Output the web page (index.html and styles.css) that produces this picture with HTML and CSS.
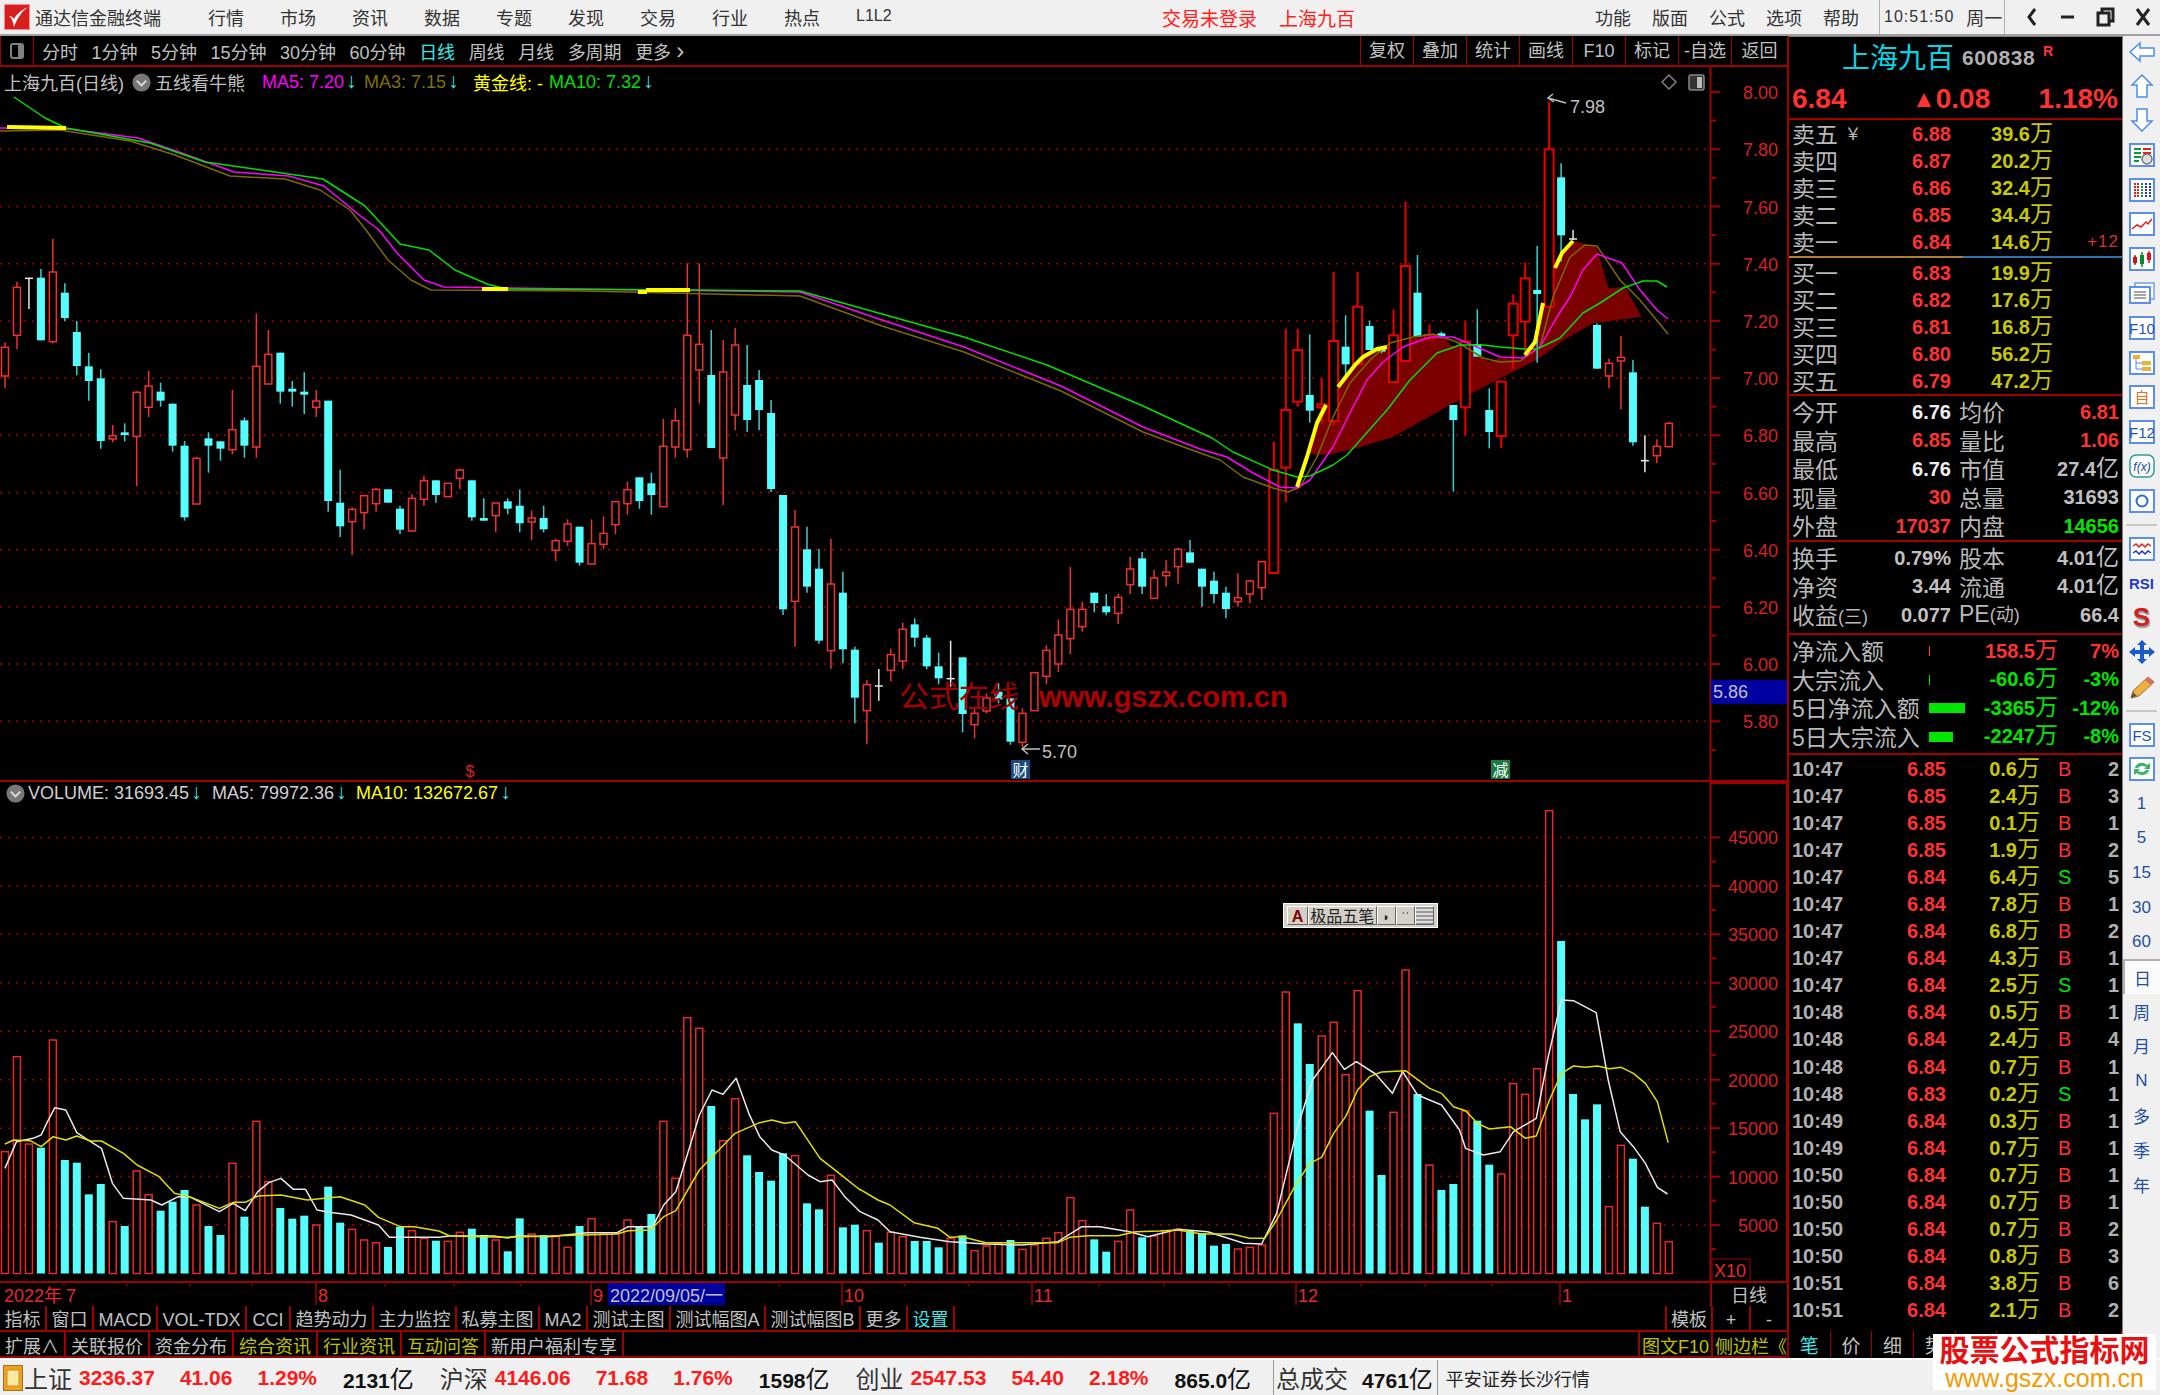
FILE: index.html
```html
<!DOCTYPE html>
<html lang="zh-CN">
<head>
    <meta charset="UTF-8">
    <title>通达信金融终端</title>
    <link rel="stylesheet" href="styles.css">
</head>
<body>
<div class="titlebar">
    <svg class="logo" viewBox="0 0 26 26"><rect width="26" height="26" fill="#d81e1e"/><rect x="0.5" y="0.5" width="25" height="25" fill="none" stroke="#f09090"/><path d="M5 12 C8 14 9 18 10 23 C13 15 17 8 24 3 C17 6 12 11 10 15 C9 13 7 12 5 12 Z" fill="#fff"/></svg>
    <span class="app-name">通达信金融终端</span>
    <nav class="menu">
        <span>行情</span><span>市场</span><span>资讯</span><span>数据</span><span>专题</span><span>发现</span><span>交易</span><span>行业</span><span>热点</span><span class="menu-l2">L1L2</span>
    </nav>
    <div class="notice"><span>交易未登录</span><span>上海九百</span></div>
    <nav class="menu menu-right"><span>功能</span><span>版面</span><span>公式</span><span>选项</span><span>帮助</span></nav>
    <div class="clock"><span class="clock-time">10:51:50</span><span>周一</span></div>
    <svg class="win-btns" viewBox="0 0 157 34">
        <path d="M30 9 L24 17 L30 25" fill="none" stroke="#222" stroke-width="3"/>
        <path d="M56 17 H69" stroke="#222" stroke-width="3"/>
        <path d="M93 13 H104 V25 H93 Z M97 13 V9 H108 V21 H104" fill="none" stroke="#222" stroke-width="3"/>
        <path d="M132 9 L144 25 M144 9 L132 25" stroke="#222" stroke-width="3"/>
    </svg>
</div>

<div class="main">
    <div class="chart-col">
        <div class="toolbar">
            <span class="tb-box"><i></i></span>
            <div class="periods">
                <span>分时</span><span>1分钟</span><span>5分钟</span><span>15分钟</span><span>30分钟</span><span>60分钟</span><span class="cyan">日线</span><span>周线</span><span>月线</span><span>多周期</span><span>更多 <i class="chev">›</i></span>
            </div>
            <div class="tb-tabs">
                <span>复权</span><span>叠加</span><span>统计</span><span>画线</span><span>F10</span><span>标记</span><span>-自选</span><span>返回</span>
            </div>
        </div>

        <div class="chart-wrap">
            <svg id="chart" viewBox="0 67 1787 1239" width="1787" height="1239"></svg>

            <div class="legend legend-price">
                <span>上海九百(日线)</span>
                <svg class="drop" viewBox="0 0 20 20"><circle cx="10" cy="10" r="9.5" fill="#777"/><path d="M5 8 L10 13 L15 8" fill="none" stroke="#ddd" stroke-width="2"/></svg>
                <span class="lg-name">五线看牛熊</span>
                <span class="lg-ma5">MA5: 7.20<b>↓</b></span>
                <span class="lg-ma3">MA3: 7.15<b>↓</b></span>
                <span class="lg-gold">黄金线: -</span>
                <span class="lg-ma10">MA10: 7.32<b>↓</b></span>
            </div>
            <div class="legend legend-vol">
                <svg class="drop" viewBox="0 0 20 20"><circle cx="10" cy="10" r="9.5" fill="#777"/><path d="M5 8 L10 13 L15 8" fill="none" stroke="#ddd" stroke-width="2"/></svg>
                <span class="lg-volume">VOLUME: 31693.45<b>↓</b></span>
                <span class="lg-volma5">MA5: 79972.36<b>↓</b></span>
                <span class="lg-volma10">MA10: 132672.67<b>↓</b></span>
            </div>

            <div class="ime">
                <span class="ime-a">A</span>
                <span class="ime-name">极品五笔</span>
                <span class="ime-btn">◗</span>
                <span class="ime-btn">ˈˈ</span>
                <span class="ime-btn ime-kb"></span>
            </div>
        </div>

        <div class="tabrow">
            <span>指标</span><span>窗口</span><span>MACD</span><span>VOL-TDX</span><span>CCI</span><span>趋势动力</span><span>主力监控</span><span>私募主图</span><span>MA2</span><span>测试主图</span><span>测试幅图A</span><span>测试幅图B</span><span>更多</span><span class="cyan">设置</span>
            <div class="tabrow-right"><span class="cell-l">模板</span><span class="cell-s">+</span><span class="cell-s">-</span></div>
        </div>
        <div class="tabrow tabrow-wide">
            <span>扩展∧</span><span>关联报价</span><span>资金分布</span><span class="olive">综合资讯</span><span class="olive">行业资讯</span><span class="olive">互动问答</span><span>新用户福利专享</span>
            <div class="tabrow-right"><span class="olive">图文F10</span><span class="olive cell-side">侧边栏《</span></div>
        </div>
    </div>

    <div class="panel">
        <div class="sec sec-head">
            <div class="stock-title"><span class="stock-name">上海九百</span><span class="stock-code">600838</span><span class="stock-r">R</span></div>
            <div class="stock-price"><span>6.84</span><span><i class="up">▲</i>0.08</span><span>1.18%</span></div>
        </div>

        <div class="sec sec-book">
            <div class="book"><span class="lb">卖五 <em>￥</em></span><span class="red">6.88</span><span class="qty">39.6<i>万</i></span><span></span></div>
            <div class="book"><span class="lb">卖四</span><span class="red">6.87</span><span class="qty">20.2<i>万</i></span><span></span></div>
            <div class="book"><span class="lb">卖三</span><span class="red">6.86</span><span class="qty">32.4<i>万</i></span><span></span></div>
            <div class="book"><span class="lb">卖二</span><span class="red">6.85</span><span class="qty">34.4<i>万</i></span><span></span></div>
            <div class="book"><span class="lb">卖一</span><span class="red">6.84</span><span class="qty">14.6<i>万</i></span><span class="delta">+12</span></div>
            <div class="book-split"></div>
            <div class="book"><span class="lb">买一</span><span class="red">6.83</span><span class="qty">19.9<i>万</i></span><span></span></div>
            <div class="book"><span class="lb">买二</span><span class="red">6.82</span><span class="qty">17.6<i>万</i></span><span></span></div>
            <div class="book"><span class="lb">买三</span><span class="red">6.81</span><span class="qty">16.8<i>万</i></span><span></span></div>
            <div class="book"><span class="lb">买四</span><span class="red">6.80</span><span class="qty">56.2<i>万</i></span><span></span></div>
            <div class="book"><span class="lb">买五</span><span class="red">6.79</span><span class="qty">47.2<i>万</i></span><span></span></div>
        </div>

        <div class="sec sec-stats">
            <div class="stat"><span class="lb">今开</span><span class="white">6.76</span><span class="lb lb2">均价</span><span class="red">6.81</span></div>
            <div class="stat"><span class="lb">最高</span><span class="red">6.85</span><span class="lb lb2">量比</span><span class="red">1.06</span></div>
            <div class="stat"><span class="lb">最低</span><span class="white">6.76</span><span class="lb lb2">市值</span><span class="grey">27.4<i>亿</i></span></div>
            <div class="stat"><span class="lb">现量</span><span class="red">30</span><span class="lb lb2">总量</span><span class="grey">31693</span></div>
            <div class="stat"><span class="lb">外盘</span><span class="red">17037</span><span class="lb lb2">内盘</span><span class="green">14656</span></div>
        </div>

        <div class="sec sec-stats2">
            <div class="stat"><span class="lb">换手</span><span class="grey">0.79%</span><span class="lb lb2">股本</span><span class="grey">4.01<i>亿</i></span></div>
            <div class="stat"><span class="lb">净资</span><span class="grey">3.44</span><span class="lb lb2">流通</span><span class="grey">4.01<i>亿</i></span></div>
            <div class="stat"><span class="lb">收益<small>(三)</small></span><span class="grey">0.077</span><span class="lb lb2">PE<small>(动)</small></span><span class="grey">66.4</span></div>
        </div>

        <div class="sec sec-flow">
            <div class="flow"><span class="lb">净流入额</span><span class="fbar"><i class="tick-red"></i></span><span class="red">158.5<i>万</i></span><span class="red">7%</span></div>
            <div class="flow"><span class="lb">大宗流入</span><span class="fbar"><i class="tick-green"></i></span><span class="green">-60.6<i>万</i></span><span class="green">-3%</span></div>
            <div class="flow"><span class="lb">5日净流入额</span><span class="fbar"><i class="bar-long"></i></span><span class="green">-3365<i>万</i></span><span class="green">-12%</span></div>
            <div class="flow"><span class="lb">5日大宗流入</span><span class="fbar"><i class="bar-short"></i></span><span class="green">-2247<i>万</i></span><span class="green">-8%</span></div>
        </div>

        <div class="ticks">
            <div class="trow"><span>10:47</span><span class="red">6.85</span><span class="qty">0.6<i>万</i></span><span class="red">B</span><span>2</span></div>
            <div class="trow"><span>10:47</span><span class="red">6.85</span><span class="qty">2.4<i>万</i></span><span class="red">B</span><span>3</span></div>
            <div class="trow"><span>10:47</span><span class="red">6.85</span><span class="qty">0.1<i>万</i></span><span class="red">B</span><span>1</span></div>
            <div class="trow"><span>10:47</span><span class="red">6.85</span><span class="qty">1.9<i>万</i></span><span class="red">B</span><span>2</span></div>
            <div class="trow"><span>10:47</span><span class="red">6.84</span><span class="qty">6.4<i>万</i></span><span class="green">S</span><span>5</span></div>
            <div class="trow"><span>10:47</span><span class="red">6.84</span><span class="qty">7.8<i>万</i></span><span class="red">B</span><span>1</span></div>
            <div class="trow"><span>10:47</span><span class="red">6.84</span><span class="qty">6.8<i>万</i></span><span class="red">B</span><span>2</span></div>
            <div class="trow"><span>10:47</span><span class="red">6.84</span><span class="qty">4.3<i>万</i></span><span class="red">B</span><span>1</span></div>
            <div class="trow"><span>10:47</span><span class="red">6.84</span><span class="qty">2.5<i>万</i></span><span class="green">S</span><span>1</span></div>
            <div class="trow"><span>10:48</span><span class="red">6.84</span><span class="qty">0.5<i>万</i></span><span class="red">B</span><span>1</span></div>
            <div class="trow"><span>10:48</span><span class="red">6.84</span><span class="qty">2.4<i>万</i></span><span class="red">B</span><span>4</span></div>
            <div class="trow"><span>10:48</span><span class="red">6.84</span><span class="qty">0.7<i>万</i></span><span class="red">B</span><span>1</span></div>
            <div class="trow"><span>10:48</span><span class="red">6.83</span><span class="qty">0.2<i>万</i></span><span class="green">S</span><span>1</span></div>
            <div class="trow"><span>10:49</span><span class="red">6.84</span><span class="qty">0.3<i>万</i></span><span class="red">B</span><span>1</span></div>
            <div class="trow"><span>10:49</span><span class="red">6.84</span><span class="qty">0.7<i>万</i></span><span class="red">B</span><span>1</span></div>
            <div class="trow"><span>10:50</span><span class="red">6.84</span><span class="qty">0.7<i>万</i></span><span class="red">B</span><span>1</span></div>
            <div class="trow"><span>10:50</span><span class="red">6.84</span><span class="qty">0.7<i>万</i></span><span class="red">B</span><span>1</span></div>
            <div class="trow"><span>10:50</span><span class="red">6.84</span><span class="qty">0.7<i>万</i></span><span class="red">B</span><span>2</span></div>
            <div class="trow"><span>10:50</span><span class="red">6.84</span><span class="qty">0.8<i>万</i></span><span class="red">B</span><span>3</span></div>
            <div class="trow"><span>10:51</span><span class="red">6.84</span><span class="qty">3.8<i>万</i></span><span class="red">B</span><span>6</span></div>
            <div class="trow"><span>10:51</span><span class="red">6.84</span><span class="qty">2.1<i>万</i></span><span class="red">B</span><span>2</span></div>
        </div>

        <div class="ptabs"><span class="cyan">笔</span><span>价</span><span>细</span><span>势</span><span></span><span></span><span></span><span></span></div>
    </div>

    <div class="side">
        <div class="si"><svg viewBox="0 0 28 24"><path d="M2 12 L12 3 V8 H26 V16 H12 V21 Z" fill="#fff" stroke="#4a8cf0" stroke-width="1.5"/></svg></div>
        <div class="si"><svg viewBox="0 0 28 24"><path d="M14 1 L24 11 H19 V23 H9 V11 H4 Z" fill="#fff" stroke="#4a8cf0" stroke-width="1.5"/></svg></div>
        <div class="si"><svg viewBox="0 0 28 24"><path d="M14 23 L24 13 H19 V1 H9 V13 H4 Z" fill="#fff" stroke="#4a8cf0" stroke-width="1.5"/></svg></div>
        <div class="si"><svg viewBox="0 0 28 24"><rect class="bx" x="2" y="1" width="24" height="22"/><path d="M6 6 H13 M6 10 H13" stroke="#0a9a3a" stroke-width="2"/><path d="M15 6 H23 M15 10 H23" stroke="#e02020" stroke-width="2"/><path d="M6 14 H13 M6 18 H11" stroke="#0a9a3a" stroke-width="2"/><circle cx="19" cy="16" r="5" fill="#ddd" stroke="#777" stroke-width="1.5"/></svg></div>
        <div class="si"><svg viewBox="0 0 28 24"><rect class="bx" x="2" y="1" width="24" height="22"/><path d="M7 5 V20 M10 5 V20" stroke="#e02020" stroke-width="2" stroke-dasharray="2 1"/><path d="M14 5 V20" stroke="#0a9a3a" stroke-width="2" stroke-dasharray="2 1"/><path d="M18 5 V20 M22 5 V20" stroke="#2030d0" stroke-width="2" stroke-dasharray="2 1"/></svg></div>
        <div class="si"><svg viewBox="0 0 28 24"><rect class="bx" x="2" y="1" width="24" height="22"/><path d="M4 17 L9 13 L13 15 L18 10 L20 12 L24 7" fill="none" stroke="#e02020" stroke-width="1.5"/></svg></div>
        <div class="si"><svg viewBox="0 0 28 24"><rect class="bx" x="2" y="1" width="24" height="22"/><path d="M7 8 V18 M14 5 V20" stroke="#0a8a30" stroke-width="1.5"/><path d="M21 4 V16 M7 9 V17" stroke="#e01010" stroke-width="1.5"/><rect x="5" y="10" width="4" height="6" fill="#e01010"/><rect x="12" y="8" width="4" height="9" fill="#0a8a30"/><rect x="19" y="6" width="4" height="7" fill="#e01010"/></svg></div>
        <div class="si"><svg viewBox="0 0 28 24"><rect x="7" y="2" width="19" height="16" fill="#fff" stroke="#6ca0ee" stroke-width="1.5"/><rect class="bx" x="2" y="6" width="20" height="16"/><path d="M6 11 H18 M6 14 H18 M6 17 H18" stroke="#888" stroke-width="1.5"/></svg></div>
        <div class="si"><svg viewBox="0 0 28 24"><rect class="bx" x="2" y="1" width="24" height="22"/><text class="ic-t" x="14" y="18">F10</text></svg></div>
        <div class="si"><svg viewBox="0 0 28 24"><rect class="bx" x="2" y="1" width="24" height="22"/><rect x="5" y="4" width="7" height="4" fill="#f0b030"/><rect x="14" y="10" width="9" height="4" fill="#f0b030"/><rect x="14" y="16" width="9" height="4" fill="#f0b030"/><path d="M8 8 V18 H14 M8 12 H14" fill="none" stroke="#4a8cf0"/></svg></div>
        <div class="si"><svg viewBox="0 0 28 24"><rect class="bx" x="2" y="1" width="24" height="22"/><text class="ic-zi" x="14" y="18">自</text></svg></div>
        <div class="si"><svg viewBox="0 0 28 24"><rect class="bx" x="2" y="1" width="24" height="22"/><text class="ic-t" x="14" y="18">F12</text></svg></div>
        <div class="si"><svg viewBox="0 0 28 24"><rect x="2" y="1" width="24" height="22" rx="6" fill="#fff" stroke="#2a9a9a" stroke-width="1.5"/><text class="ic-fx" x="14" y="17">f(x)</text></svg></div>
        <div class="si"><svg viewBox="0 0 28 24"><rect class="bx" x="2" y="1" width="24" height="22"/><circle cx="14" cy="12" r="5.5" fill="none" stroke="#2a6ad8" stroke-width="2"/></svg></div>
        <div class="si-sep"></div>
        <div class="si"><svg viewBox="0 0 28 24"><rect class="bx" x="2" y="1" width="24" height="22"/><path d="M5 9 L8 7 L11 10 L14 7 L17 10 L20 7 L23 9" fill="none" stroke="#e02020" stroke-width="1.5"/><path d="M5 16 L8 14 L11 17 L14 14 L17 17 L20 14 L23 16" fill="none" stroke="#2030d0" stroke-width="1.5"/></svg></div>
        <div class="si si-rsi">RSI</div>
        <div class="si si-s">S</div>
        <div class="si"><svg viewBox="0 0 28 24"><path d="M14 0 L19 5 H16 V10 H21 V7 L27 12 L21 17 V14 H16 V19 H19 L14 24 L9 19 H12 V14 H7 V17 L1 12 L7 7 V10 H12 V5 H9 Z" fill="#1a5ad0"/></svg></div>
        <div class="si"><svg viewBox="0 0 28 24"><path d="M3 23 L5 16 L20 2 L26 7 L11 21 Z" fill="#f0b040" stroke="#a07030"/><path d="M20 2 L26 7 L23 10 L17 5 Z" fill="#d87060"/><path d="M3 23 L5 17 L9 21 Z" fill="#555"/></svg></div>
        <div class="si-sep"></div>
        <div class="si"><svg viewBox="0 0 28 24"><rect class="bx" x="2" y="1" width="24" height="22"/><text class="ic-t" x="14" y="18">FS</text></svg></div>
        <div class="si"><svg viewBox="0 0 28 24"><rect class="bx" x="2" y="1" width="24" height="22"/><path d="M7 11 C8 6 15 4 19 8 L22 6 V12 H16 L18 10 C15 8 11 9 10 11 Z" fill="#3cb46a"/><path d="M21 13 C20 18 13 20 9 16 L6 18 V12 H12 L10 14 C13 16 17 15 18 13 Z" fill="#3cb46a"/></svg></div>
        <div class="si si-p">1</div>
        <div class="si si-p">5</div>
        <div class="si si-p">15</div>
        <div class="si si-p">30</div>
        <div class="si si-p">60</div>
        <div class="si si-p si-on">日</div>
        <div class="si si-p">周</div>
        <div class="si si-p">月</div>
        <div class="si si-p">N</div>
        <div class="si si-p">多</div>
        <div class="si si-p">季</div>
        <div class="si si-p">年</div>
    </div>
</div>

<div class="statusbar">
    <svg class="st-icon" viewBox="0 0 20 26"><rect x="0.5" y="0.5" width="19" height="25" fill="#f2a020" stroke="#a87010"/><rect x="4" y="5" width="12" height="16" fill="#ffe9a0" stroke="#c89020"/></svg>
    <span class="st-name st-first">上证</span><span class="st-num st-tight">3236.37</span><span class="st-num">41.06</span><span class="st-num">1.29%</span><span class="st-vol">2131<i>亿</i></span>
    <span class="st-name">沪深</span><span class="st-num st-tight">4146.06</span><span class="st-num">71.68</span><span class="st-num">1.76%</span><span class="st-vol">1598<i>亿</i></span>
    <span class="st-name">创业</span><span class="st-num st-tight">2547.53</span><span class="st-num">54.40</span><span class="st-num">2.18%</span><span class="st-vol">865.0<i>亿</i></span>
    <div class="st-total"><span class="st-name st-zero">总成交</span><span class="st-vol st-vol2">4761<i>亿</i></span></div>
    <span class="st-broker">平安证券长沙行情</span>
</div>

<div class="stamp">
    <div class="stamp-cn">股票公式指标网</div>
    <div class="stamp-en">www.gszx.com.cn</div>
</div>

<script src="chart.js"></script>
</body>
</html>
```

FILE: styles.css
```css
html, body {
    margin: 0;
    padding: 0;
    background: #000;
}

body {
    position: relative;
    width: 2160px;
    height: 1395px;
    overflow: hidden;
    display: flex;
    flex-direction: column;
    font-family: "Liberation Sans", "Noto Sans CJK SC", sans-serif;
    font-size: 18px;
    color: #c0c0c0;
}

i, em { font-style: normal; }

.cyan { color: #3fe6e6 !important; }
.olive { color: #c0c000 !important; }
.red { color: #ff3232; }
.green { color: #00e600; }
.white { color: #f0f0f0; }
.grey { color: #c0c0c0; }

/* title bar */
.titlebar {
    height: 36px;
    box-sizing: border-box;
    flex: none;
    display: flex;
    align-items: center;
    background: #f0f0f0;
    border-bottom: 2px solid #a0a0a0;
    color: #333;
    white-space: nowrap;
}
.titlebar span, .titlebar nav, .titlebar div { flex: none; }
.logo { width: 26px; height: 26px; margin-left: 4px; flex: none; }
.app-name { margin-left: 5px; }
.menu { display: flex; gap: 36px; margin-left: 47px; }
.menu-l2 { font-size: 16px; width: 35px; line-height: 24px; }
.notice { display: flex; gap: 22px; margin-left: 271px; font-size: 19px; color: #ff2020; }
.menu-right { gap: 21px; margin-left: 240px; }
.clock {
    display: flex;
    align-items: center;
    gap: 12px;
    height: 34px;
    margin-left: 20px;
    padding-left: 4px;
    width: 120px;
    border-left: 1px solid #b0b0b0;
    border-right: 1px solid #b0b0b0;
}
.clock-time { font-size: 16px; letter-spacing: 1px; }
.win-btns { width: 157px; height: 34px; flex: none; }

/* main area */
.main {
    flex: 1;
    display: flex;
    min-height: 0;
}
.chart-col {
    width: 1787px;
    flex: none;
    display: flex;
    flex-direction: column;
}

.toolbar {
    height: 31px;
    box-sizing: border-box;
    flex: none;
    display: flex;
    align-items: center;
    border-bottom: 2px solid #a00000;
}
.tb-box {
    width: 34px;
    height: 29px;
    box-sizing: border-box;
    display: flex;
    align-items: center;
    justify-content: center;
    border-right: 1px solid #a00000;
    border-left: 1px solid #a00000;
}
.tb-box i {
    width: 14px;
    height: 16px;
    box-sizing: border-box;
    border: 2px solid #808080;
    border-radius: 3px;
    border-right-width: 6px;
}
.periods { display: flex; gap: 13.5px; margin-left: 8px; white-space: nowrap; }
.chev { font-size: 24px; line-height: 18px; }
.tb-tabs { display: flex; margin-left: auto; height: 29px; }
.tb-tabs span {
    width: 52px;
    line-height: 31px;
    text-align: center;
    border-left: 1px solid #a00000;
}
.tb-tabs span:last-child { width: 55px; }

.chart-wrap {
    position: relative;
    height: 1239px;
    flex: none;
}
#chart { display: block; }

.legend {
    position: absolute;
    display: flex;
    align-items: center;
    height: 24px;
    left: 4px;
    white-space: nowrap;
}
.legend b { font-weight: 400; font-size: 21px; line-height: 20px; color: #3fe6e6; margin-left: 2px; }
.legend-price { top: 3px; }
.legend-vol { top: 714px; }
.drop { width: 19px; height: 19px; margin-left: 8px; flex: none; }
.legend-vol .drop { margin-left: 2px; }
.lg-name { margin-left: 4px; }
.lg-ma5 { color: #ff00ff; margin-left: 17px; width: 102px; }
.lg-ma3 { color: #807000; width: 109px; }
.lg-gold { color: #ffff00; width: 76px; }
.lg-ma10 { color: #00e000; }
.lg-volume { margin-left: 3px; width: 184px; color: #d0d0d0; }
.lg-volma5 { width: 144px; color: #d0d0d0; }
.lg-volma10 { color: #ffff00; }

.ime {
    position: absolute;
    left: 1283px;
    top: 836px;
    width: 155px;
    height: 25px;
    box-sizing: border-box;
    display: flex;
    padding: 2px 3px;
    background: #d4d0c8;
    border: 1px solid #fff;
    color: #222;
    font-size: 16px;
    line-height: 20px;
}
.ime span {
    box-sizing: border-box;
    text-align: center;
    border: 1px solid;
    border-color: #fff #666 #666 #fff;
}
.ime-a { width: 22px; color: #800000; font-weight: bold; }
.ime-name { width: 72px; }
.ime-btn { width: 20px; font-size: 12px; }
.ime-kb { background: repeating-linear-gradient(#999 0 2px, #ddd 2px 4px); }

.tabrow {
    height: 26px;
    box-sizing: border-box;
    flex: none;
    display: flex;
    border-bottom: 2px solid #a00000;
    line-height: 28px;
}
.tabrow > span {
    min-width: 44px;
    box-sizing: border-box;
    padding: 0 4.5px;
    text-align: center;
    border-right: 2px solid #a00000;
    white-space: nowrap;
}
.tabrow-wide { line-height: 31px; }
.tabrow-wide > span { padding: 0 5px; }
.tabrow-right { display: flex; margin-left: auto; }
.tabrow-right span {
    box-sizing: border-box;
    text-align: center;
    border-left: 2px solid #a00000;
    padding: 0 2px;
    white-space: nowrap;
}
.cell-l { width: 46px; }
.cell-s { width: 38px; }
.cell-side { width: 76px; }

/* quote panel */
.panel {
    width: 335px;
    box-sizing: border-box;
    flex: none;
    display: flex;
    flex-direction: column;
    border-left: 2px solid #a00000;
    background: #000;
}
.sec {
    flex: none;
    box-sizing: border-box;
    padding: 0 3px;
    border-bottom: 2px solid #a00000;
}
.sec-head { height: 84px; padding: 0; border-top: 1px solid #808080; }
.sec-book { height: 276px; }
.sec-stats { height: 146px; }
.sec-stats2 { height: 93px; }
.sec-flow { height: 120px; }

.stock-title {
    height: 38px;
    margin-bottom: 8px;
    display: flex;
    align-items: center;
    padding-left: 53px;
}
.stock-name { font-size: 28px; color: #00d8e8; }
.stock-code { font-size: 21px; font-weight: bold; color: #b0b0b0; margin-left: 8px; margin-top: 4px; letter-spacing: 0.5px; }
.stock-r { font-size: 14px; font-weight: bold; color: #ff3232; margin-left: 8px; align-self: flex-start; margin-top: 6px; }
.stock-price {
    display: grid;
    grid-template-columns: 120px 80px 1fr;
    padding: 0 4px 0 3px;
    font-size: 28px;
    line-height: 32px;
    font-weight: bold;
    color: #ff3232;
    white-space: nowrap;
}
.stock-price span:last-child { text-align: right; }
.up { font-size: 24px; vertical-align: 1px; }

.lb { font-size: 23px; color: #b8b8b8; white-space: nowrap; margin-bottom: 2px; }
.lb em { font-size: 17px; vertical-align: 3px; }
.lb small { font-size: 18px; vertical-align: 1px; }
.qty { color: #c8c800; }
.book, .stat, .flow, .trow {
    display: grid;
    align-items: center;
    font-size: 20px;
    font-weight: bold;
    text-align: right;
    white-space: nowrap;
}
.book i, .stat i, .flow i, .trow i { font-weight: 400; font-size: 23px; line-height: 20px; }
.book i { color: #c8c800; }
.book .lb, .stat .lb, .flow .lb { text-align: left; font-weight: 400; }
.book {
    grid-template-columns: 100px 59px 102px 66px;
    height: 27px;
}
.book:first-child { margin-top: -4px; }
.book-split {
    height: 2px;
    margin: 5px -3px -3px;
    background: linear-gradient(90deg, #b08030 0 174px, #3070b0 174px);
}
.delta { font-size: 17px; font-weight: 400; color: #d83030; letter-spacing: 1px; }
.stat {
    grid-template-columns: 70px 89px 88px 80px;
    height: 28.5px;
}
.stat:first-child, .flow:first-child { margin-top: -2px; }
.lb2 { padding-left: 8px; }
.flow {
    grid-template-columns: 137px 40px 89px 61px;
    height: 28.5px;
}
.fbar { display: flex; align-items: center; }
.fbar i { display: block; height: 10px; }
.tick-red { width: 1px; background: #ff3232; }
.tick-green { width: 1px; background: #00e600; }
.bar-long { width: 36px; background: #00e600; }
.bar-short { width: 24px; background: #00e600; }

.ticks { flex: 1; padding: 1px 3px 0; }
.trow {
    grid-template-columns: 100px 54px 94px 35px 44px;
    height: 27.05px;
    color: #b0b0b0;
}
.trow span:first-child { text-align: left; }
.trow span:nth-child(4) { text-align: left; padding-left: 18px; font-weight: 400; }
.trow span:nth-child(3) { color: #c8c800; }

.ptabs {
    height: 27px;
    flex: none;
    display: flex;
    font-size: 19px;
    line-height: 31px;
}
.ptabs span {
    width: 41px;
    text-align: center;
    border-right: 1px solid #a00000;
}

/* icon strip */
.side {
    flex: 1;
    background: #f0f0f0;
    overflow: hidden;
    border-left: 1px solid #808080;
}
.si {
    height: 34.6px;
    display: flex;
    align-items: center;
    justify-content: center;
    color: #1f4fa0;
}
.si:first-child { height: 32.6px; }
.si svg { width: 28px; height: 24px; }
.si-sep { height: 13px; position: relative; }
.si-sep::after {
    content: "";
    position: absolute;
    left: 3px;
    right: 3px;
    top: 6px;
    border-top: 2px solid #c8c8c8;
}
.bx { fill: #fff; stroke: #5a8ef0; stroke-width: 2; }
.ic-t { font-size: 15px; fill: #2050c0; text-anchor: middle; }
.ic-zi { font-size: 15px; fill: #e07020; text-anchor: middle; }
.ic-fx { font-size: 12px; fill: #0a4ab0; text-anchor: middle; font-style: italic; }
.si-rsi { font-weight: bold; font-size: 15px; color: #2838c0; }
.si-s { font-weight: bold; font-size: 26px; color: #d02020; text-shadow: 1px 2px 1px #999; }
.si-p { font-size: 17px; }
.si-on {
    background: #fafafa;
    border-left: 2px solid #b0b0b0;
    border-top: 2px solid #b0b0b0;
    box-sizing: border-box;
}

/* bottom index bar */
.statusbar {
    height: 37px;
    box-sizing: border-box;
    flex: none;
    display: flex;
    align-items: center;
    background: #f0f0f0;
    border-top: 2px solid #fff;
    color: #222;
    white-space: nowrap;
}
.st-icon { width: 20px; height: 26px; margin-left: 3px; flex: none; }
.st-name { font-size: 24px; margin-left: 26px; color: #333; }
.st-first { margin-left: 1px; }
.st-zero { margin-left: 2px; }
.st-num { font-size: 21px; font-weight: bold; color: #ff1a1a; margin-left: 25px; }
.st-tight { margin-left: 7px; }
.st-vol { font-size: 21px; font-weight: bold; color: #111; margin-left: 26px; }
.st-vol i { font-size: 24px; font-weight: 400; }
.st-vol2 { margin-left: 14px; }
.st-total {
    display: flex;
    align-items: center;
    height: 35px;
    margin-left: 22px;
    padding-right: 4px;
    border-left: 1px solid #999;
    border-right: 1px solid #999;
}
.st-broker { margin-left: 8px; }

/* site stamp over the corner */
.stamp {
    position: absolute;
    left: 1933px;
    top: 1334px;
    width: 223px;
    height: 56px;
    background: #fff;
    text-align: center;
}
.stamp-cn { font-size: 30px; line-height: 33px; font-weight: bold; color: #e81010; }
.stamp-en { font-size: 25px; line-height: 23px; color: #f59a00; }

/* svg chart text */
.ax { font-size: 18px; fill: #d82020; text-anchor: end; }
.mon { font-size: 18px; fill: #e82828; }
.note { font-size: 18px; fill: #c0c0c0; }
.wm-cn { font-size: 30px; fill: #a80000; }
.wm-en { font-size: 29px; font-weight: bold; fill: #b00000; }
.tag { font-size: 16px; fill: #fff; text-anchor: middle; }
```

FILE: chart.js
```js
// rows: type high bodyTop bodyBottom low, y read off the chart at scale 3 from y0
const candleParts = [
    { y0: 230, rows: `R 337 352 438 475,R 155 172 316 358,W 143 145 147 237,C 117 143 331 331,R 26 126 335 340,
        C 160 188 264 273,C 273 306 408 436,C 368 409 453 512,C 418 445 633 656,R 585 617 627 637,
        C 580 607 615 634,R 483 487 619 768,R 422 468 532 561,C 458 485 512 530,C 521 521 647 665,
        C 633 647 862 872,R 680 685 822 822,C 607 625 647 728,C 634 634 656 692,R 480 599 659 673,
        C 562 571 647 683,R 250 409 651 683,R 300 373 462 462,C 368 368 485 521,C 453 476 485 530,
        C 427 485 494 552,R 480 513 532 561,C 512 512 813 845,C 719 818 889 921,R 832 838 875 975,
        R 797 797 848 898,R 773 778 821 845,C 778 778 818 818,C 827 836 899 912,R 793 805 903 903,
        R 737 752 808 827,C 751 751 795 818,R 760 760 800 800,R 716 720 745 777,C 751 751 862 872,
        C 805 864 872 872,R 819 819 857 907,C 805 814 836 853,C 778 827 880 907,R 841 864 876 930,
        C 827 864 898 907,R 926 932 961 993,R 868 882 934 948,C 890 890 998 1007,R 868 941 1002 1002,
        R 859 910 943 957,R 815 815 884 912,R 755 779 821 854,C 742 742 813 836,C 728 760 795 854,
        R 567 649 830 830,R 535 572 651 683,R 100 316 659 683,R 100 343 420 520` },
    { y0: 0, rows: `C 990 1125 1344 1344,R 1020 1116 1374 1515,R 984 1035 1245 1290,C 1035 1155 1260 1296,
        C 1110 1140 1230 1290,C 1200 1239 1467 1476` },
    { y0: 450, rows: `C 135 135 478 495,R 180 231 454 590,C 230 298 410 428,C 297 356 572 581,R 266 402 602 657,
        C 365 428 598 640,C 590 599 743 820,R 690 704 782 883,W 657 708 710 752,R 596 614 661 694,
        R 518 538 633 658,C 505 523 563 591,C 555 563 649 658,C 608 649 685 703,W 572 686 690 710,
        C 622 622 792 847,R 770 790 824 865,R 730 744 783 790,C 700 725 748 760,C 745 745 875 884,
        R 775 790 877 892,R 668 668 782 782,R 586 601 679 702,R 509 555 642 666,R 351 478 566 612,
        R 455 478 530 545,C 428 428 459 487,C 432 469 487 496,R 432 442 490 522,R 320 357 404 432,
        C 306 325 410 432,R 360 384 445 445,R 330 366 377 410,R 293 298 350 401,C 270 307 338 338,
        C 356 356 410 470,C 365 392 432 460,C 410 428 477 505,R 370 443 455 470,R 390 393 432 460,
        R 335 335 413 450` },
    { y0: 90, rows: `R 1055 1140 1449 1449,R 716 960 1133 1236,R 716 780 935 950,C 733 915 962 998,R 865 943 952 1000,
        R 545 753 993 1005,C 676 770 823 860,R 545 650 822 822,C 692 708 780 780,C 770 775 785 790,
        R 658 736 876 876,R 335 528 813 813,C 495 608 740 740,R 703 735 745 745,C 725 730 738 745,
        C 945 945 990 1205,R 694 755 952 1035,C 658 762 800 800,C 895 960 1026 1075,R 875 875 1038 1075,
        R 613 641 736 836,R 518 565 695 800,C 468 600 612 818,R 35 178 650 650,C 220 262 436 515,
        W 420 447 450 450,- 0 0 0 0,C 700 705 836 836,R 806 820 858 895,R 738 802 813 958,
        C 810 847 1057 1067,W 1036 1112 1115 1147,R 1048 1069 1097 1120,R 995 1000 1070 1070` }
];

// volume bar tops, negative = cyan bar
const volA = [455,170,432,-443,120,-480,-488,-583,-552,665,-678,513,584,-632,-605,-570,615,-678,-705,490,-650,364,545,-624,-656,-647,675,-560,-668,688,720,728,-741,-680,692,715,-722,724,697,-686,-705,720,-754,-655,702,-705,710,742,-678,656,700,700,660,-680,-642,364,535,53,85,-318,422,296,-466,-516,-542,-460,467,-610,-628,526,-682,-674];
const volB = [1352,-1388,1357,1370,-1383,-1383,-1402,1375,-1366,1412,1398,1390,-1380,1408,1395,1375,1358,1253,1322,-1378,-1415,1384,1290,-1372,1368,1352,1348,-1352,-1360,-1397,-1392,1407,1402,1395,1000,636,-730,-852,768,727,884,632,-992,-1185,997,570,-942,1155,-1230,-1212,993,-1022,-1154,1182,911,943,866,92,-483,-942,-1018,-973,1280,1096,-1136,-1280,1330,1385];

const xOf = i => 5 + 11.97 * i;

let svg = '';
const line = (x1, y1, x2, y2, color, w, extra) =>
    `<line x1="${x1}" y1="${y1}" x2="${x2}" y2="${y2}" stroke="${color}" stroke-width="${w}" ${extra || ''}/>`;
const text = (x, y, s, cls) => `<text x="${x}" y="${y}" class="${cls}">${s}</text>`;
const poly = (pts, color, w) =>
    `<polyline points="${pts.map(p => p.join(',')).join(' ')}" fill="none" stroke="${color}" stroke-width="${w}" stroke-linejoin="round"/>`;
// crop coordinates back to page coordinates
const zoomed = (pts, x0, sx, y0) => pts.map(p => [x0 + p[0] / sx, y0 + p[1] / 3]);

const DARKRED = '#a00000';
const DOTS = 'stroke-dasharray="2 6"';

// grid + axis labels, price panel
const priceY = p => 149.3 + (7.8 - p) * 286;
[8.0, 7.8, 7.6, 7.4, 7.2, 7.0, 6.8, 6.6, 6.4, 6.2, 6.0, 5.8].forEach(p => {
    const y = priceY(p);
    if (p < 8) svg += line(0, y, 1710, y, DARKRED, 1.5, DOTS);
    svg += line(1711, y, 1720, y, DARKRED, 2);
    svg += line(1711, y + 28.6, 1716, y + 28.6, DARKRED, 2);
    svg += text(1778, y + 7, p.toFixed(2), 'ax');
});

// area between the averages
const area = zoomed([[330,1092],[345,1000],[380,945],[420,890],[470,820],[510,785],[560,770],[600,750],[690,735],[735,740],[750,765],[780,770],[870,815],[900,805],[960,810],[975,795],[1010,750],[1060,540],[1085,490],[1120,452],[1155,462],[1190,470],[1225,595],[1275,590],[1325,680],[1250,690],[1180,700],[1100,745],[1010,810],[880,875],[760,940],[580,1040],[470,1075],[380,1095]], 1200, 3, 90);
svg += `<polygon points="${area.map(p => p.join(',')).join(' ')}" fill="#7b0000"/>`;

// candles
let idx = 0;
candleParts.forEach(part => {
    part.rows.split(',').forEach(row => {
        const f = row.trim().split(' ');
        const i = idx++;
        if (f[0] === '-') return;
        const [h, t, b, l] = f.slice(1).map(v => part.y0 + v / 3);
        const x = xOf(i);
        const heavy = i >= 106 && i <= 131;
        if (f[0] === 'R') {
            const c = heavy ? '#e80000' : '#f03030';
            const sw = heavy ? 2 : 1.5;
            const w = heavy ? 9 : 7;
            svg += line(x, h, x, l, c, sw);
            svg += `<rect x="${x - w / 2}" y="${t}" width="${w}" height="${b - t}" fill="#000" stroke="${c}" stroke-width="${sw}"/>`;
        } else if (f[0] === 'C') {
            svg += line(x, h, x, l, '#38d0d0', 1.5);
            svg += `<rect x="${x - 4}" y="${t}" width="8" height="${Math.max(b - t, 2)}" fill="#55fdfd"/>`;
        } else {
            svg += line(x, h, x, l, '#e8e8e8', 1.5);
            svg += line(x - 4, t, x + 4, t, '#e8e8e8', 1.5);
        }
    });
});

// moving averages
const green = [[14,97],[45,118],[66,128],[100,134],[150,143],[205,162],[275,172],[323,179],[365,206],[400,244],[429,250],[455,270],[487,284],[507,289],[692,290],[800,291],[882,314],[964,337],[1047,365],[1143,406],[1212,438],[1233,452],[1273,470],[1297,477],[1310,476],[1333,465],[1347,455],[1363,437],[1387,410],[1410,380],[1437,353],[1460,345],[1483,345],[1500,347],[1525,349],[1537,349],[1560,338],[1583,313],[1600,303],[1623,288],[1643,281],[1657,281],[1667,287]];
const magenta = [[0,128],[69,129],[138,138],[179,152],[234,172],[289,176],[324,186],[358,214],[379,230],[397,253],[424,280],[444,287],[800,292],[882,320],[964,347],[1061,386],[1143,427],[1200,449],[1227,457],[1253,473],[1280,487],[1297,488],[1310,480],[1333,447],[1353,407],[1367,380],[1383,362],[1403,347],[1430,337],[1453,337],[1477,347],[1500,357],[1523,358],[1540,347],[1557,317],[1570,297],[1583,270],[1597,254],[1622,263],[1640,290],[1657,310],[1668,319]];
const olive = [[0,131],[60,130],[130,141],[175,155],[230,176],[285,179],[320,190],[350,210],[366,230],[388,260],[411,280],[431,290],[585,291],[800,296],[882,326],[964,352],[1061,391],[1143,432],[1200,453],[1220,460],[1243,477],[1273,488],[1288,492],[1300,487],[1317,457],[1333,417],[1350,383],[1370,360],[1390,343],[1413,337],[1433,334],[1457,342],[1483,358],[1500,362],[1520,361],[1540,347],[1553,297],[1570,257],[1585,245],[1597,246],[1620,280],[1640,300],[1668,334]];
svg += poly(olive, '#7a6a00', 1.5) + poly(magenta, '#ff00ff', 1.5) + poly(green, '#00e000', 1.5);

[[[7,127],[66,128]], [[482,289],[508,289]], [[638,292],[647,292]], [[646,290],[690,290]],
 [[1297,487],[1307,457],[1317,423],[1326,405]], [[1338,387],[1355,365],[1363,357],[1377,349],[1387,347]],
 [[1525,355],[1535,342],[1543,303]], [[1555,268],[1562,253],[1573,241]]]
    .forEach(seg => { svg += poly(seg, '#ffff00', 4); });

// price notes
svg += line(1548, 98, 1566, 103, '#c0c0c0', 1.5) + `<path d="M1553 94 L1548 98 L1554 102" fill="none" stroke="#c0c0c0" stroke-width="1.5"/>`;
svg += text(1570, 113, '7.98', 'note');
svg += line(1022, 749, 1040, 749, '#c0c0c0', 1.5) + `<path d="M1028 744 L1022 749 L1028 754" fill="none" stroke="#c0c0c0" stroke-width="1.5"/>`;
svg += text(1042, 758, '5.70', 'note');
svg += text(899, 707, '公式在线', 'wm-cn');
svg += text(1039, 707, 'www.gszx.com.cn', 'wm-en');

// event tags
svg += `<rect x="1011" y="760" width="19" height="19" fill="#184a80"/>` + text(1020.5, 776, '财', 'tag');
svg += `<rect x="1491" y="760" width="19" height="19" fill="#1a7a40"/>` + text(1500.5, 776, '减', 'tag');
svg += `<text x="470" y="777" class="tag" style="fill:#e02020">$</text>`;

// pane frames
svg += line(0, 781, 1787, 781, DARKRED, 2);
svg += line(1710.5, 67, 1710.5, 1283, DARKRED, 2);
svg += `<rect x="1711" y="680" width="76" height="24" fill="#0000a0"/><text x="1713" y="698" class="note">5.86</text>`;
svg += `<path d="M1669 75 L1676 82 L1669 89 L1662 82 Z" fill="none" stroke="#808080" stroke-width="1.5"/><rect x="1689" y="75" width="15" height="15" rx="2" fill="#333" stroke="#888" stroke-width="1.5"/><rect x="1697" y="77" width="5" height="11" fill="#bbb"/>`;

// volume grid
const volY = v => 1273.5 - v * 0.00969;
[45000, 40000, 35000, 30000, 25000, 20000, 15000, 10000, 5000].forEach(v => {
    const y = volY(v);
    svg += line(0, y, 1710, y, DARKRED, 1.5, DOTS);
    svg += line(1711, y, 1720, y, DARKRED, 2);
    svg += line(1711, y + 24, 1716, y + 24, DARKRED, 2);
    svg += text(1778, y + 7, v, 'ax');
});

// volume bars
const drawBar = (i, y, cyan) => {
    const x = xOf(i);
    if (cyan) return `<rect x="${x - 4}" y="${y}" width="8" height="${1273.5 - y}" fill="#55fdfd"/>`;
    return `<rect x="${x - 3.5}" y="${y}" width="7" height="${1273.5 - y}" fill="#000" stroke="#e82828" stroke-width="1.5"/>`;
};
volA.forEach((v, i) => { svg += drawBar(i, 1000 + Math.abs(v) / 3, v < 0); });
volB.forEach((v, i) => { svg += drawBar(i + 72, 780 + Math.abs(v) / 3, v < 0); });

// volume averages
const white1 = zoomed([[9,505],[30,425],[60,415],[75,405],[85,370],[100,323],[120,330],[140,398],[165,425],[185,445],[205,550],[225,595],[275,600],[295,615],[325,590],[345,590],[400,635],[425,610],[447,632],[470,575],[490,548],[512,535],[535,568],[557,568],[578,630],[600,637],[640,645],[690,675],[710,712],[800,712],[820,708],[900,708],[925,714],[945,707],[1000,710],[1070,698],[1125,698],[1145,680],[1190,680],[1210,615],[1232,575],[1250,480],[1275,345],[1298,270],[1318,283],[1342,235],[1365,340],[1385,410],[1407,450],[1430,465],[1473,525],[1495,545],[1517,540],[1540,590],[1568,635]], 0, 1.823, 1000);
const white2 = zoomed([[0,1295],[30,1320],[50,1355],[100,1372],[150,1385],[210,1392],[270,1395],[330,1385],[370,1340],[400,1340],[450,1355],[480,1370],[530,1348],[580,1355],[640,1390],[670,1392],[695,1300],[730,1040],[755,900],[788,818],[808,868],[828,845],[860,882],[888,940],[905,875],[930,945],[970,975],[1000,1050],[1010,1105],[1040,1125],[1068,1115],[1090,1055],[1128,1015],[1148,830],[1170,660],[1190,662],[1228,698],[1248,900],[1268,1055],[1290,1100],[1310,1150],[1330,1222],[1347,1242]], 860, 1.668, 780);
const yellow1 = zoomed([[9,432],[25,420],[55,422],[75,440],[97,410],[120,420],[140,408],[165,423],[185,423],[225,460],[250,495],[290,530],[318,580],[345,590],[400,625],[425,607],[447,607],[470,588],[512,585],[560,600],[620,590],[665,615],[690,652],[730,680],[755,680],[800,693],[820,708],[920,712],[1000,708],[1065,705],[1125,702],[1145,692],[1185,690],[1210,650],[1232,632],[1275,510],[1340,400],[1385,368],[1407,360],[1430,370],[1450,365],[1495,475],[1530,520],[1568,570]], 0, 1.823, 1000);
const yellow2 = zoomed([[0,1228],[30,1260],[50,1275],[90,1328],[130,1345],[150,1372],[170,1370],[210,1388],[330,1388],[350,1372],[380,1367],[430,1367],[460,1355],[500,1353],[530,1350],[570,1362],[620,1362],[650,1375],[675,1375],[695,1320],[725,1220],[750,1150],[770,1132],[790,1060],[810,1010],[830,930],[850,890],[870,876],[910,872],[950,925],[970,940],[990,980],[1010,992],[1030,1030],[1050,1047],[1085,1040],[1110,1075],[1128,1068],[1150,960],[1170,880],[1190,858],[1210,862],[1230,858],[1250,866],[1270,862],[1290,880],[1310,910],[1330,965],[1348,1088]], 860, 1.668, 780);
svg += poly(white1.concat(white2), '#e8e8e8', 1.5) + poly(yellow1.concat(yellow2), '#e0e000', 1.5);

svg += `<rect x="1712" y="1259" width="38" height="22" fill="none" stroke="${DARKRED}"/><text x="1714" y="1277" class="mon">X10</text>`;

// time axis
svg += line(0, 1282, 1787, 1282, DARKRED, 2);
svg += line(1711, 783, 1786, 783, DARKRED, 2) + line(1786.5, 782, 1786.5, 1282, DARKRED, 1);
[64, 127, 190, 252, 385, 454, 521, 779, 905, 969, 1099, 1164, 1229, 1361, 1425, 1492].forEach(x => { svg += line(x, 1283, x, 1287, DARKRED, 1); });
[316, 591, 842, 1032, 1296, 1560].forEach(x => { svg += line(x, 1283, x, 1305, DARKRED, 1.5); });
svg += text(4, 1302, '2022年', 'mon') + text(66, 1302, '7', 'mon') + text(318, 1302, '8', 'mon') + text(593, 1302, '9', 'mon');
svg += text(844, 1302, '10', 'mon') + text(1034, 1302, '11', 'mon') + text(1298, 1302, '12', 'mon') + text(1562, 1302, '1', 'mon');
svg += `<rect x="608" y="1283" width="117" height="22" fill="#0000a0"/><text x="610" y="1302" class="note">2022/09/05/一</text>`;
svg += line(1711, 1283, 1711, 1306, DARKRED, 2) + text(1731, 1302, '日线', 'note');

document.getElementById('chart').innerHTML = svg;
```
